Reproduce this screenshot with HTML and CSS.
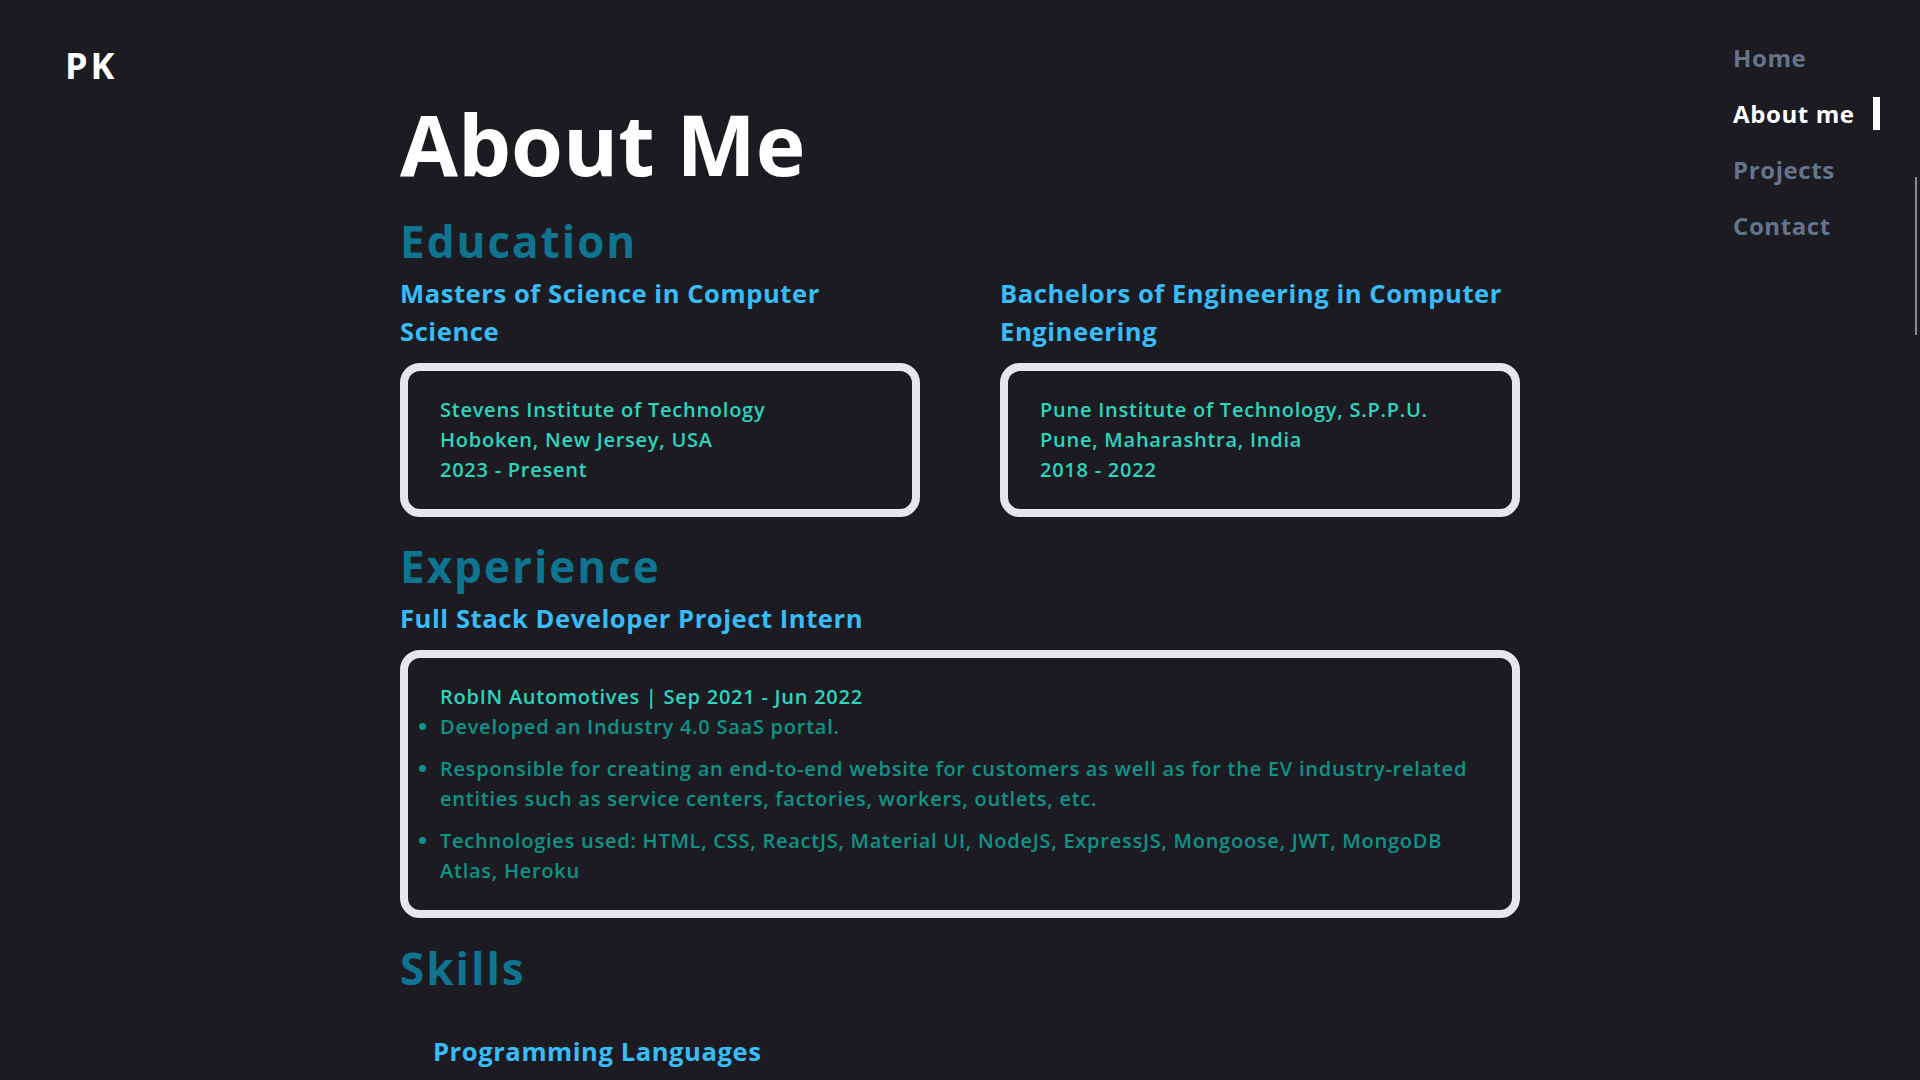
FILE: index.html
```html
<!DOCTYPE html>
<html lang="en">
<head>
<meta charset="utf-8">
<title>About Me</title>
<link rel="stylesheet" href="styles.css">
</head>
<body>
<div class="page">
  <aside class="brand">
    <div class="logo">PK</div>
  </aside>
  <main class="main">
    <h1 class="title">About Me</h1>

    <h2 class="section">Education</h2>
    <div class="edu-grid">
      <div class="edu">
        <h3 class="sub">Masters of Science in Computer Science</h3>
        <div class="card">
          <p class="line">Stevens Institute of Technology</p>
          <p class="line">Hoboken, New Jersey, USA</p>
          <p class="line">2023 - Present</p>
        </div>
      </div>
      <div class="edu">
        <h3 class="sub">Bachelors of Engineering in Computer Engineering</h3>
        <div class="card">
          <p class="line">Pune Institute of Technology, S.P.P.U.</p>
          <p class="line">Pune, Maharashtra, India</p>
          <p class="line">2018 - 2022</p>
        </div>
      </div>
    </div>

    <h2 class="section exp">Experience</h2>
    <h3 class="sub">Full Stack Developer Project Intern</h3>
    <div class="card">
      <p class="line">RobIN Automotives | Sep 2021 - Jun 2022</p>
      <ul class="bullets">
        <li>Developed an Industry 4.0 SaaS portal.</li>
        <li>Responsible for creating an end-to-end website for customers as well as for the EV industry-related entities such as service centers, factories, workers, outlets, etc.</li>
        <li>Technologies used: HTML, CSS, ReactJS, Material UI, NodeJS, ExpressJS, Mongoose, JWT, MongoDB Atlas, Heroku</li>
      </ul>
    </div>

    <h2 class="section skills">Skills</h2>
    <h3 class="sub indent">Programming Languages</h3>
  </main>
  <nav class="nav">
    <a class="nav-link" href="#">Home</a>
    <a class="nav-link active" href="#">About me</a>
    <a class="nav-link" href="#">Projects</a>
    <a class="nav-link" href="#">Contact</a>
  </nav>
</div>
<div class="scroll-thumb"></div>
</body>
</html>
```
FILE: styles.css
```css
html, body {
  margin: 0;
  padding: 0;
  height: 1080px;
  overflow: hidden;
  background: #1c1b22;
}
body {
  font-family: "Open Sans", "Liberation Sans", sans-serif;
  color: #ffffff;
}
.page {
  display: flex;
  align-items: flex-start;
}
.brand {
  width: 335px;
  padding-left: 65px;
  padding-top: 48px;
}
.logo {
  font-size: 36px;
  line-height: 36px;
  font-weight: 700;
  letter-spacing: 3px;
  color: #ffffff;
}
.main {
  width: 1120px;
  padding-top: 94px;
}
.title {
  margin: 0;
  font-size: 84px;
  line-height: 100px;
  font-weight: 700;
  color: #ffffff;
}
.section {
  margin: 21px 0 0;
  font-size: 44px;
  line-height: 52px;
  font-weight: 700;
  letter-spacing: 2px;
  color: #0e7490;
}
.section.exp { margin-top: 23px; }
.section.skills { margin-top: 24px; }
.sub {
  margin: 8px 0 0;
  font-size: 25.6px;
  line-height: 38px;
  font-weight: 700;
  letter-spacing: 0.55px;
  color: #38bdf8;
}
.sub.indent {
  margin-left: 33px;
  margin-top: 39px;
}
.edu-grid {
  display: grid;
  grid-template-columns: 520px 520px;
  column-gap: 80px;
}
.edu .sub { padding-right: 16px; }
.card {
  margin-top: 12px;
  border: 8px solid #e5e7eb;
  border-radius: 20px;
  padding: 24px 32px;
}
.line {
  margin: 0;
  font-size: 20px;
  line-height: 30px;
  font-weight: 600;
  letter-spacing: 0.75px;
  color: #2dd4bf;
}
.bullets {
  margin: 0;
  padding: 0;
  list-style: disc outside;
  color: #0d9488;
  font-size: 20px;
  line-height: 30px;
  font-weight: 600;
  letter-spacing: 0.75px;
}
.bullets li + li { margin-top: 12px; }
.nav {
  margin-left: auto;
  margin-right: 40px;
  padding-top: 41px;
  display: flex;
  flex-direction: column;
  gap: 23px;
  width: 147px;
}
.nav-link {
  display: block;
  font-size: 24px;
  line-height: 33px;
  font-weight: 700;
  letter-spacing: 0.6px;
  color: #64748b;
  text-decoration: none;
}
.nav-link.active {
  color: #ffffff;
  border-right: 7px solid #ffffff;
}
.scroll-thumb {
  position: fixed;
  right: 3px;
  top: 177px;
  width: 2px;
  height: 158px;
  background: #8a8a8e;
}
```
